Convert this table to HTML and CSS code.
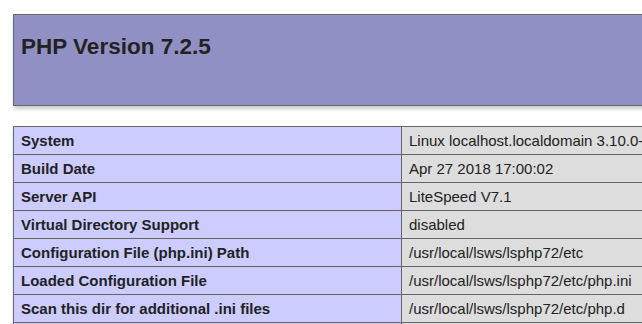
FILE: index.html
```html
<!DOCTYPE html>
<html lang="en">
<head>
  <meta charset="UTF-8">
  <meta name="viewport" content="width=device-width, initial-scale=1.0">
  <title>phpinfo()</title>
  <link rel="stylesheet" href="styles.css">
</head>
<body>
  <div class="center">
    <table>
      <tr class="h">
        <td>
          <h1 class="p">PHP Version 7.2.5</h1>
        </td>
      </tr>
    </table>

    <table>
      <tr><td class="e">System </td><td class="v">Linux localhost.localdomain 3.10.0-693.21.1.el7.x86_64 #1 SMP Wed Mar 7 19:03:37 UTC 2018 x86_64 </td></tr>
      <tr><td class="e">Build Date </td><td class="v">Apr 27 2018 17:00:02 </td></tr>
      <tr><td class="e">Server API </td><td class="v">LiteSpeed V7.1 </td></tr>
      <tr><td class="e">Virtual Directory Support </td><td class="v">disabled </td></tr>
      <tr><td class="e">Configuration File (php.ini) Path </td><td class="v">/usr/local/lsws/lsphp72/etc </td></tr>
      <tr><td class="e">Loaded Configuration File </td><td class="v">/usr/local/lsws/lsphp72/etc/php.ini </td></tr>
      <tr><td class="e">Scan this dir for additional .ini files </td><td class="v">/usr/local/lsws/lsphp72/etc/php.d </td></tr>
      <tr><td class="e">Additional .ini files parsed </td><td class="v">/usr/local/lsws/lsphp72/etc/php.d/10-opcache.ini </td></tr>
    </table>
  </div>
</body>
</html>
```

FILE: styles.css
```css
html {
  overflow: hidden;
}

body {
  background-color: #fff;
  color: #222;
  font-family: "Liberation Sans", Arial, sans-serif;
  margin: 0;
  padding: 14px 0 0 13px;
}

table {
  border-collapse: collapse;
  border: 0;
  width: 1168px;
  box-shadow: 1px 3px 4px #ccc;
}

.center table {
  margin: 0 0 20px 0;
  text-align: left;
}

td {
  border: 1px solid #666;
  font-size: 15px;
  line-height: 17px;
  vertical-align: baseline;
  padding: 5px 6px 5px 7px;
}

h1 {
  font-size: 22.5px;
  line-height: 26px;
  margin: 14px 0 40px;
}

.p {
  text-align: left;
}

.h td {
  background-color: #9190c4;
  font-weight: bold;
}

.e {
  background-color: #ccf;
  width: 374px;
  font-weight: bold;
}

.v {
  background-color: #ddd;
}
```
